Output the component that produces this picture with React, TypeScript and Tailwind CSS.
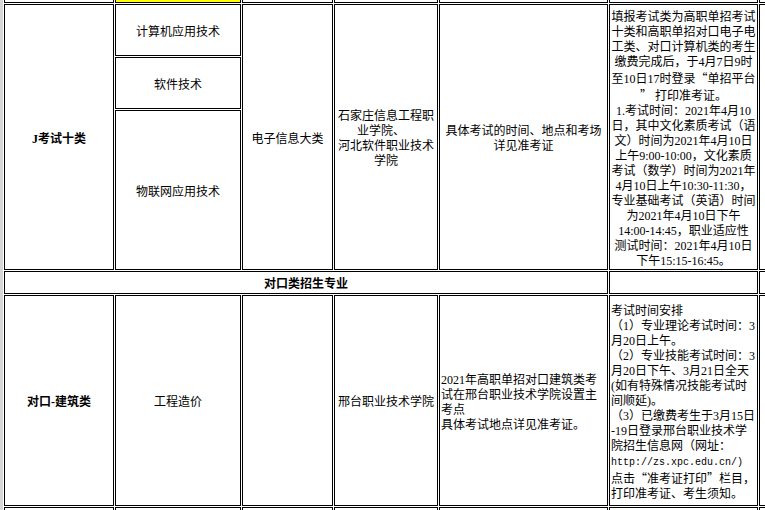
import type { ReactNode } from "react";

const Q = ({ children }: { children: ReactNode }) => <span className="font-['Noto_Sans_CJK_SC',sans-serif]">{children}</span>;

const noticeLines: ReactNode[] = [
  "填报考试类为高职单招考试",
  "十类和高职单招对口电子电",
  "工类、对口计算机类的考生",
  "缴费完成后，于4月7日9时",
  <>至10日17时登录<Q>“</Q>单招平台</>,
  <><Q>”</Q> 打印准考证。</>,
  "1.考试时间：2021年4月10",
  "日，其中文化素质考试（语",
  "文）时间为2021年4月10日",
  "上午9:00-10:00，文化素质",
  "考试（数学）时间为2021年",
  "4月10日上午10:30-11:30，",
  "专业基础考试（英语）时间",
  "为2021年4月10日下午",
  "14:00-14:45，职业适应性",
  "测试时间：2021年4月10日",
  "下午15:15-16:45。",
];

const schoolLines: ReactNode[] = [
  "石家庄信息工程职",
  <span className="pr-[10px]">业学院、</span>,
  "河北软件职业技术",
  "学院",
];

const buildLines: ReactNode[] = [
  "考试时间安排",
  "（1）专业理论考试时间：3",
  "月20日上午。",
  "（2）专业技能考试时间：3",
  "月20日下午、3月21日全天",
  "(如有特殊情况技能考试时",
  "间顺延)。",
  "（3）已缴费考生于3月15日",
  "-19日登录邢台职业技术学",
  "院招生信息网（网址：",
  <span className="font-['Liberation_Mono',monospace] text-[10px]">http://zs.xpc.edu.cn/)</span>,
  <>点击<Q>“</Q>准考证打印<Q>”</Q>栏目，</>,
  "打印准考证、考生须知。",
];

function Lines({ items, left }: { items: ReactNode[]; left?: boolean }) {
  return (
    <div className={left ? "text-left" : "text-center"}>
      {items.map((line, i) => (
        <div key={i} className="whitespace-nowrap">{line}</div>
      ))}
    </div>
  );
}

function Cell({ children, className = "", left }: { children?: ReactNode; className?: string; left?: boolean }) {
  return (
    <div className={`flex items-center border border-black bg-white px-px pt-[4px] pb-0 ${left ? "justify-start" : "justify-center text-center"} ${className}`}>
      {children}
    </div>
  );
}

export default function App() {
  const cols = [0, 1, 2, 3, 4, 5, 6];

  return (
    <div className="flex h-[510px] w-[765px] overflow-hidden bg-white font-['Liberation_Serif','Noto_Sans_CJK_SC',serif] text-[12px] leading-[15px] text-black">
      <div className="w-[3px] shrink-0 bg-[#d6d6d6]" />
      <div className="shrink-0 pl-px">
        <div className="grid grid-cols-[110px_126px_91px_104px_169px_149px_60px] grid-rows-[3px_52px_52px_160px_23px_211px_30px] gap-px">
          {cols.map((c) => (
            <div key={`top-${c}`} className={`border-x border-b border-black ${c === 1 ? "bg-[#ffff00]" : "bg-white"}`} />
          ))}

          <Cell className="row-span-3 font-bold">J考试十类</Cell>
          <Cell>计算机应用技术</Cell>
          <Cell className="row-span-3">电子信息大类</Cell>
          <Cell className="row-span-3">
            <Lines items={schoolLines} />
          </Cell>
          <Cell className="row-span-3">
            <Lines items={["具体考试的时间、地点和考场", "详见准考证"]} />
          </Cell>
          <Cell className="row-span-3">
            <Lines items={noticeLines} />
          </Cell>
          <Cell className="row-span-3" />
          <Cell>软件技术</Cell>
          <Cell>物联网应用技术</Cell>

          <Cell className="col-span-5 font-bold">对口类招生专业</Cell>
          <Cell />
          <Cell />

          <Cell className="font-bold">对口-建筑类</Cell>
          <Cell>工程造价</Cell>
          <Cell />
          <Cell>邢台职业技术学院</Cell>
          <Cell left>
            <Lines left items={["2021年高职单招对口建筑类考", "试在邢台职业技术学院设置主", "考点", "具体考试地点详见准考证。"]} />
          </Cell>
          <Cell left>
            <Lines left items={buildLines} />
          </Cell>
          <Cell />

          {cols.map((c) => (
            <div key={`bottom-${c}`} className="border-x border-t border-black bg-white" />
          ))}
        </div>
      </div>
    </div>
  );
}
